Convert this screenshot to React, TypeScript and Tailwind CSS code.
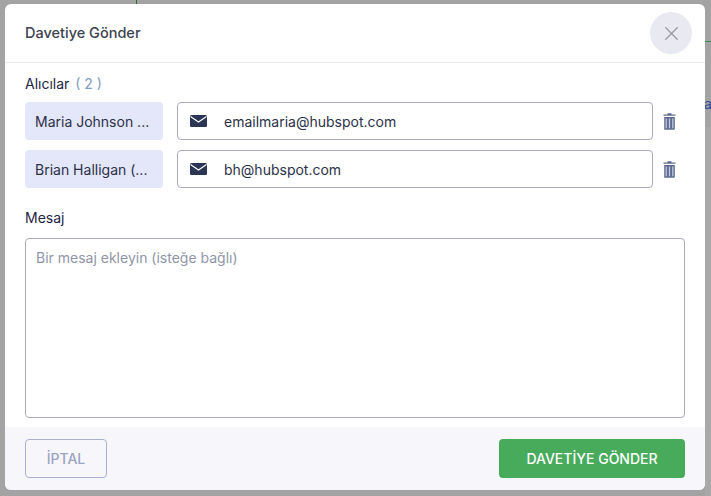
import { X } from "lucide-react";

const recipients = [
  { name: "Maria Johnson ...", email: "emailmaria@hubspot.com" },
  { name: "Brian Halligan (...", email: "bh@hubspot.com" },
];

function MailIcon() {
  return (
    <svg width="17" height="12" viewBox="0 0 17 12" className="shrink-0">
      <rect width="17" height="12" rx="1.5" fill="#2b3556" />
      <path d="M0.5 1.5 L8.5 7 L16.5 1.5" fill="none" stroke="#ffffff" strokeWidth="1.1" />
    </svg>
  );
}

function TrashIcon() {
  return (
    <svg width="13" height="17" viewBox="0 0 13 17">
      <path d="M0.5 1.5 H12.5 V2.8 H0.5 Z M4.5 0.3 H8.5 V1.5 H4.5 Z" fill="#5f6c92" />
      <path
        d="M1.2 4 H11.8 V16 Q11.8 16.8 11 16.8 H2 Q1.2 16.8 1.2 16 Z"
        fill="#5f6c92"
      />
      <path d="M3.2 5.5 V15.3 M6.5 5.5 V15.3 M9.8 5.5 V15.3" stroke="#c3c9dc" strokeWidth="1.3" />
    </svg>
  );
}

export default function App() {
  return (
    <div className="relative h-[496px] w-[711px] overflow-hidden bg-[#a3a3a3] pl-[5px] pt-[4px] font-['Inter',sans-serif]">
      {/* bits of the page behind the overlay */}
      <div className="absolute left-[136px] top-0 h-[4px] w-px bg-[#2f6b3a]" />
      <div className="absolute right-0 top-[41px] h-px w-[6px] bg-[#3f8a4a]" />
      <span className="absolute left-[704px] top-[93px] text-[14px] text-[#2f4a9a]">a</span>
      <div className="absolute right-0 top-[127px] h-[369px] w-[6px] bg-[#a8a8a8]" />

      <div className="relative flex h-[486px] w-[700px] flex-col overflow-hidden rounded-[6px] bg-white">
        <div className="flex h-[59px] shrink-0 items-center justify-between border-b border-[#ebebf3] pl-[20px] pr-[13px]">
          <h2 className="text-[14.5px] font-medium text-[#3d424f]">Davetiye Gönder</h2>
          <button className="flex h-[42px] w-[42px] items-center justify-center rounded-full bg-[#e9e9f1] text-[#9a9aa2]">
            <X size={23} strokeWidth={1.4} />
          </button>
        </div>

        <div className="flex flex-1 flex-col px-[20px] pt-[11px]">
          <div className="text-[14px] leading-[20px] text-[#1f2547]">
            Alıcılar <span className="ml-[2px] text-[#7d9cc0]">( 2 )</span>
          </div>

          <div className="mt-[8px] flex flex-col gap-[10px]">
            {recipients.map((r) => (
              <div key={r.email} className="flex items-center">
                <div className="flex h-[38px] w-[138px] items-center rounded-[4px] bg-[#e4e6fa] pl-[10px] text-[14px] text-[#2b3149]">
                  {r.name}
                </div>
                <div className="ml-[14px] flex h-[38px] w-[476px] items-center rounded-[4px] border border-[#a9a9c2] pl-[12px]">
                  <MailIcon />
                  <span className="ml-[17px] text-[14px] text-[#2b3149]">{r.email}</span>
                </div>
                <div className="ml-[10px] flex">
                  <TrashIcon />
                </div>
              </div>
            ))}
          </div>

          <div className="mt-[20px] text-[14px] leading-[20px] text-[#1f2547]">Mesaj</div>

          <div className="mt-[10px] h-[180px] w-[660px] rounded-[4px] border border-[#a9a9c2] px-[10px] py-[9px] text-[14px] leading-[20px] text-[#8f95a8]">
            Bir mesaj ekleyin (isteğe bağlı)
          </div>
        </div>

        <div className="flex h-[63px] shrink-0 items-center justify-between bg-[#f7f7fb] px-[20px]">
          <button className="h-[39px] w-[82px] rounded-[4px] border border-[#a9b0d2] text-[14px] font-medium text-[#9da3c2]">
            İPTAL
          </button>
          <button className="h-[39px] w-[186px] rounded-[4px] bg-[#47ab5b] text-[14px] font-medium text-white">
            DAVETİYE GÖNDER
          </button>
        </div>
      </div>
    </div>
  );
}
